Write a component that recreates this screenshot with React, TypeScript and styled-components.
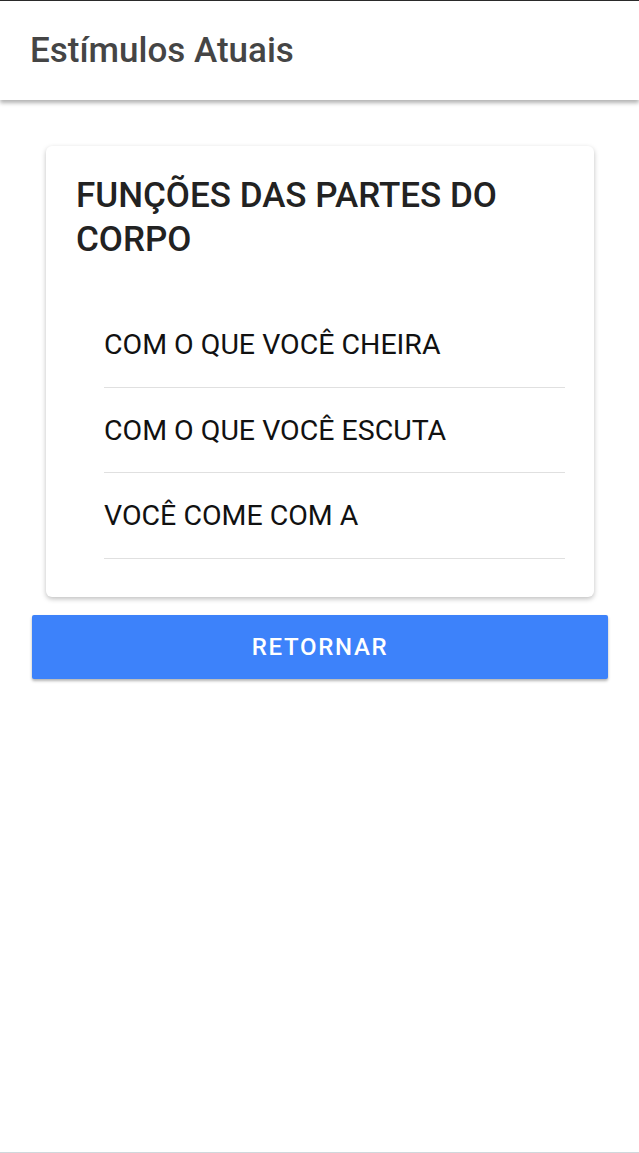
import React from 'react';
import styled, { createGlobalStyle } from 'styled-components';

const GlobalStyle = createGlobalStyle`
  html, body {
    margin: 0;
    padding: 0;
    background: #ffffff;
    font-family: Roboto, 'Noto Sans', sans-serif;
  }
`;

const stimuli = ['COM O QUE VOCÊ CHEIRA', 'COM O QUE VOCÊ ESCUTA', 'VOCÊ COME COM A'];

export default function App() {
  return (
    <>
      <GlobalStyle />
      <Screen>
        <Header>
          <HeaderTitle>Estímulos Atuais</HeaderTitle>
        </Header>
        <Content>
          <Card>
            <CardTitle>FUNÇÕES DAS PARTES DO CORPO</CardTitle>
            <List>
              {stimuli.map((item) => (
                <ListItem key={item}>{item}</ListItem>
              ))}
            </List>
          </Card>
          <ReturnButton type="button">RETORNAR</ReturnButton>
        </Content>
      </Screen>
    </>
  );
}

const Screen = styled.div`
  display: flex;
  flex-direction: column;
  height: 1153px;
  box-sizing: border-box;
  border-top: 1px solid #2a2a2a;
  border-bottom: 1px solid #d0d8dc;
  overflow: hidden;
`;

const Header = styled.div`
  display: flex;
  align-items: center;
  height: 99px;
  padding: 0 30px;
  background: #ffffff;
  box-shadow: 0 3px 4px rgba(0, 0, 0, 0.3);
  position: relative;
  z-index: 1;
`;

const HeaderTitle = styled.h1`
  margin: 0;
  font-size: 35px;
  font-weight: 500;
  color: #454545;
`;

const Content = styled.div`
  display: flex;
  flex-direction: column;
  padding: 46px 31px 0 32px;
  gap: 18px;
`;

const Card = styled.div`
  margin: 0 14px;
  padding: 28px 29px 38px 30px;
  background: #ffffff;
  border-radius: 6px;
  box-shadow: 0 2px 5px rgba(0, 0, 0, 0.25);
`;

const CardTitle = styled.h2`
  margin: 0;
  font-size: 35px;
  font-weight: 500;
  line-height: 44px;
  color: #222222;
`;

const List = styled.div`
  display: flex;
  flex-direction: column;
  padding: 40px 0 0 28px;
`;

const ListItem = styled.div`
  display: flex;
  align-items: center;
  height: 85.5px;
  box-sizing: border-box;
  padding-top: 1px;
  font-size: 28.5px;
  color: #111111;
  border-bottom: 1px solid #e0e0e0;
`;

const ReturnButton = styled.button`
  height: 64px;
  border: none;
  border-radius: 2px;
  background: #3d82fa;
  color: #ffffff;
  font-family: Roboto, 'Noto Sans', sans-serif;
  font-size: 24px;
  font-weight: 500;
  letter-spacing: 1.7px;
  box-shadow: 0 2px 3px rgba(0, 0, 0, 0.3);
`;
